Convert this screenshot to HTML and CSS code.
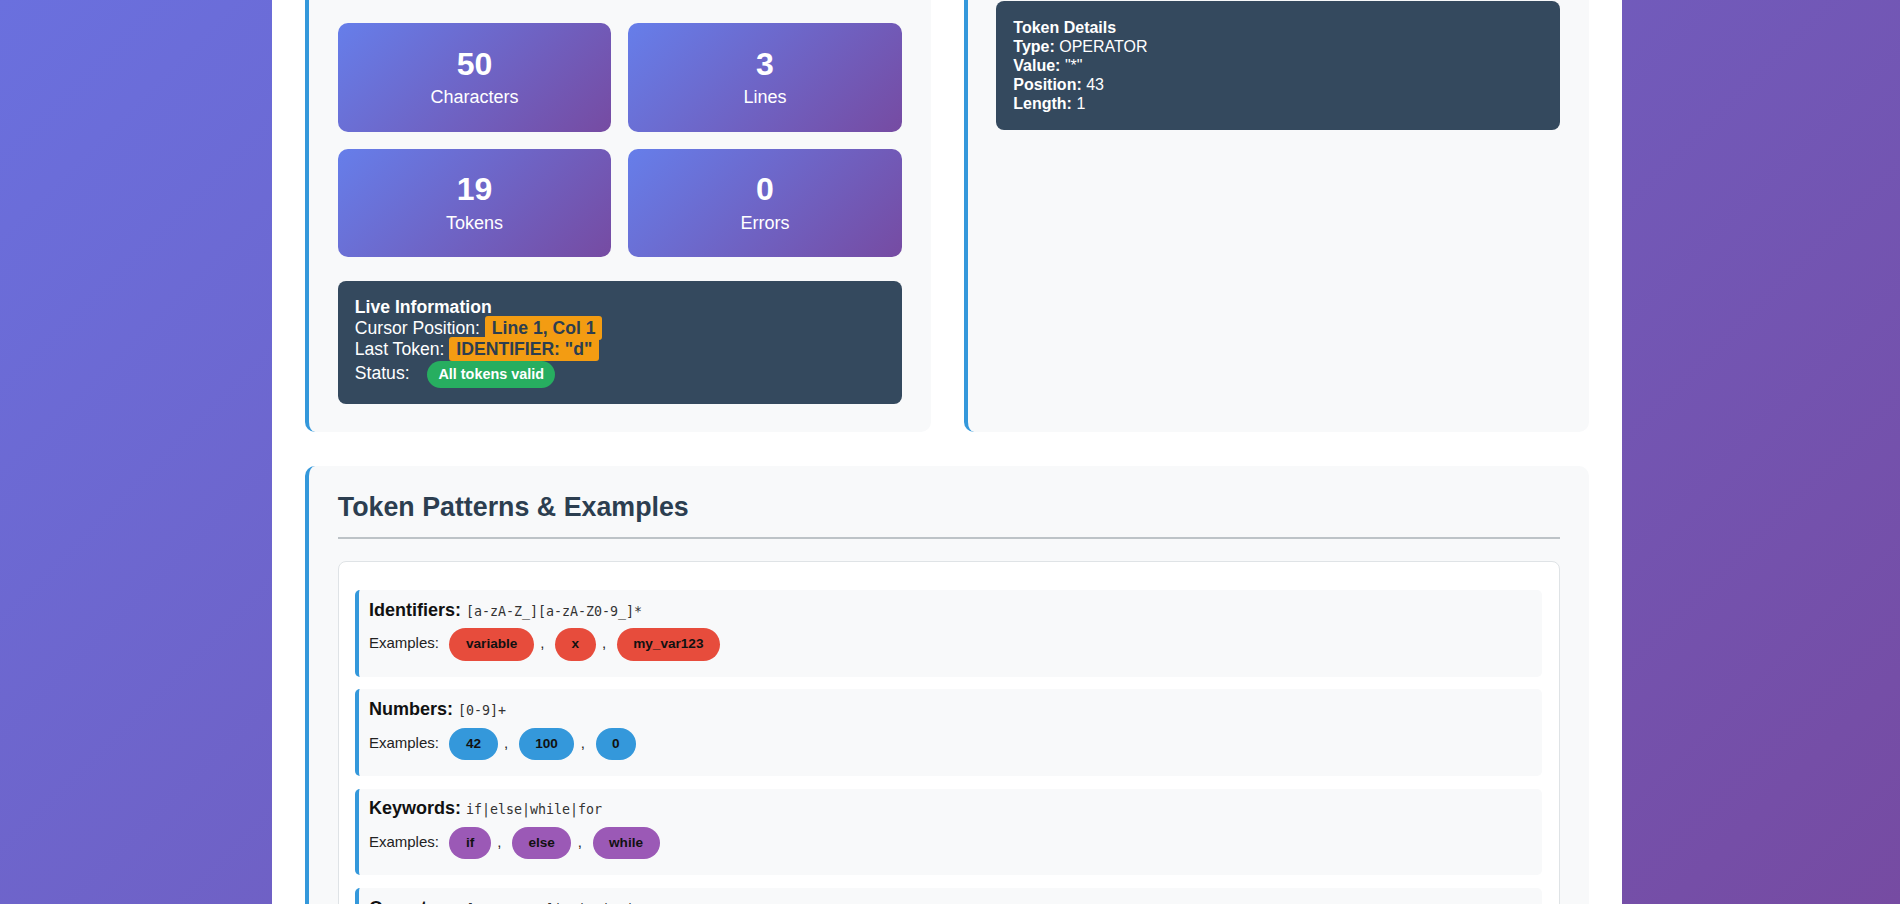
FILE: index.html
```html
<!DOCTYPE html>
<html lang="en">
<head>
<meta charset="utf-8">
<title>Lexical Analyzer</title>
<link rel="stylesheet" href="styles.css">
</head>
<body>
<div class="container">
  <div class="top-row">
    <section class="panel panel-stats">
      <div class="stats-grid">
        <div class="stat-card"><div class="stat-number">50</div><div class="stat-label">Characters</div></div>
        <div class="stat-card"><div class="stat-number">3</div><div class="stat-label">Lines</div></div>
        <div class="stat-card"><div class="stat-number">19</div><div class="stat-label">Tokens</div></div>
        <div class="stat-card"><div class="stat-number">0</div><div class="stat-label">Errors</div></div>
      </div>
      <div class="live-info">
        <div class="live-title">Live Information</div>
        <div>Cursor Position: <span class="hl">Line 1, Col 1</span></div>
        <div>Last Token: <span class="hl">IDENTIFIER: "d"</span></div>
        <div class="status-line">Status: <span class="status-pill">All tokens valid</span></div>
      </div>
    </section>
    <section class="panel panel-details">
      <div class="token-details">
        <div><strong>Token Details</strong></div>
        <div><strong>Type:</strong> OPERATOR</div>
        <div><strong>Value:</strong> "*"</div>
        <div><strong>Position:</strong> 43</div>
        <div><strong>Length:</strong> 1</div>
      </div>
    </section>
  </div>

  <section class="panel panel-patterns">
    <h2 class="section-title">Token Patterns &amp; Examples</h2>
    <div class="pattern-list">
      <div class="pattern-item">
        <div class="pattern-head"><strong>Identifiers:</strong> <code>[a-zA-Z_][a-zA-Z0-9_]*</code></div>
        <div class="pattern-examples">Examples: <span class="ex ex-id">variable</span>, <span class="ex ex-id">x</span>, <span class="ex ex-id">my_var123</span></div>
      </div>
      <div class="pattern-item">
        <div class="pattern-head"><strong>Numbers:</strong> <code>[0-9]+</code></div>
        <div class="pattern-examples">Examples: <span class="ex ex-num">42</span>, <span class="ex ex-num">100</span>, <span class="ex ex-num">0</span></div>
      </div>
      <div class="pattern-item">
        <div class="pattern-head"><strong>Keywords:</strong> <code>if|else|while|for</code></div>
        <div class="pattern-examples">Examples: <span class="ex ex-kw">if</span>, <span class="ex ex-kw">else</span>, <span class="ex ex-kw">while</span></div>
      </div>
      <div class="pattern-item">
        <div class="pattern-head"><strong>Operators:</strong> <code>[+\-*/=&lt;&gt;!]|==|!=|&lt;=|&gt;=</code></div>
        <div class="pattern-examples">Examples: <span class="ex ex-op">+</span>, <span class="ex ex-op">==</span>, <span class="ex ex-op">*</span></div>
      </div>
    </div>
  </section>
</div>
</body>
</html>
```

FILE: styles.css
```css
* {
  box-sizing: border-box;
}

html {
  height: 100%;
  overflow: hidden;
  background: linear-gradient(135deg, #6a70de 0%, #764ba2 100%) fixed;
}

body {
  margin: 0;
  padding: 0 6px 0 0;
  height: 100%;
  overflow: hidden;
  font-family: "Liberation Sans", Arial, sans-serif;
  line-height: 1.2;
  color: #222;
}

.container {
  display: flow-root;
  width: 1350px;
  min-height: 100%;
  margin: 0 auto;
  padding: 0 33px;
  background: #fff;
}

.top-row {
  display: grid;
  grid-template-columns: 1fr 1fr;
  gap: 33px;
  margin-top: -28.2px;
}

.panel {
  background: #f8f9fa;
  border-left: 4px solid #3498db;
  border-radius: 10px;
  padding: 28.8px;
}

.panel-stats {
  padding-bottom: 27.5px;
}

.stats-grid {
  display: grid;
  grid-template-columns: 1fr 1fr;
  gap: 17px;
  margin: 22.4px 0 23.3px;
}

.stat-card {
  background: linear-gradient(135deg, #667eea 0%, #764ba2 100%);
  border-radius: 10px;
  color: #fff;
  text-align: center;
  padding: 21.7px 16px 23px;
}

.stat-number {
  font-size: 32px;
  font-weight: bold;
  line-height: 38.4px;
}

.stat-label {
  font-size: 18px;
  line-height: 21.6px;
  margin-top: 4px;
}

.live-info {
  background: #34495e;
  color: #fff;
  border-radius: 8px;
  padding: 16px 16px 16px 17px;
  font-size: 17.6px;
  line-height: 21.1px;
}

.live-title {
  font-weight: bold;
}

.hl {
  background: #f39c12;
  color: #2c3e50;
  font-weight: bold;
  padding: 2px 7px;
  border-radius: 3px;
}

.status-line {
  margin-top: 1.5px;
}

.status-pill {
  display: inline-block;
  margin-left: 12.8px;
  background: #27ae60;
  color: #fff;
  font-weight: bold;
  font-size: 14.4px;
  line-height: 1.2;
  padding: 4.8px 11.2px;
  border-radius: 14px;
}

.token-details {
  background: #34495e;
  color: #fff;
  border-radius: 8px;
  padding: 17px 16px 16px 17px;
  font-size: 16px;
}

.panel-patterns {
  margin-top: 34.3px;
  padding-top: 25.8px;
}

.section-title {
  margin: 0 0 22.3px;
  padding-bottom: 13px;
  border-bottom: 2px solid #bdc3c7;
  font-size: 26.8px;
  line-height: 31.9px;
  color: #2c3e50;
}

.pattern-list {
  background: #fff;
  border: 1px solid #dfe3e6;
  border-radius: 8px;
  padding: 15.2px 17px 16px 16.3px;
}

.pattern-item {
  background: #f8f9fa;
  border-left: 4px solid #3498db;
  border-radius: 5px;
  padding: 9.6px 12px 16px 9.8px;
  margin: 12.8px 0;
}

.pattern-head {
  font-size: 18px;
  line-height: 21.1px;
  margin-bottom: 7.6px;
  color: #111;
}

.pattern-head code {
  font-family: "DejaVu Sans Mono", monospace;
  font-size: 13.3px;
  line-height: 1;
  color: #333;
}

.pattern-examples {
  font-size: 15px;
  line-height: 18px;
  color: #222;
}

.ex {
  display: inline-block;
  margin: 0 6.4px;
  padding: 8px 16.5px;
  border-radius: 20px;
  font-size: 13.6px;
  line-height: 16.3px;
  font-weight: bold;
  color: #111;
}

.ex-id {
  background: #e74c3c;
}

.ex-num {
  background: #3498db;
}

.ex-kw {
  background: #9b59b6;
}

.ex-op {
  background: #f39c12;
}
```
